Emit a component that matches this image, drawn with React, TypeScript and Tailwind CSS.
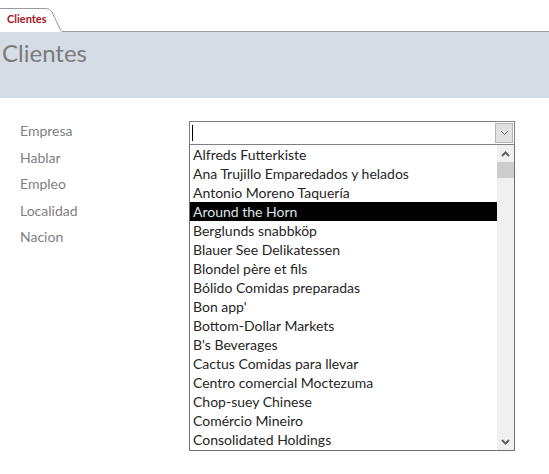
const empresas = [
  "Alfreds Futterkiste",
  "Ana Trujillo Emparedados y helados",
  "Antonio Moreno Taquería",
  "Around the Horn",
  "Berglunds snabbköp",
  "Blauer See Delikatessen",
  "Blondel père et fils",
  "Bólido Comidas preparadas",
  "Bon app'",
  "Bottom-Dollar Markets",
  "B's Beverages",
  "Cactus Comidas para llevar",
  "Centro comercial Moctezuma",
  "Chop-suey Chinese",
  "Comércio Mineiro",
  "Consolidated Holdings",
];

const campos = ["Empresa", "Hablar", "Empleo", "Localidad", "Nacion"];

function Chevron({ up, thick }: { up?: boolean; thick?: boolean }) {
  return (
    <svg width="9" height="6" viewBox="0 0 9 6" className="block">
      <path
        d={up ? "M1 5 L4.5 1.5 L8 5" : "M1 1 L4.5 4.5 L8 1"}
        fill="none"
        stroke={thick ? "#606060" : "#707070"}
        strokeWidth={thick ? 2 : 1}
      />
    </svg>
  );
}

export default function App() {
  const selected = 3;

  return (
    <div className="w-[549px] h-[474px] bg-white overflow-hidden font-['Lato','Open_Sans',sans-serif]">
      {/* tab strip */}
      <div className="h-[32px] pt-[8px] flex items-end">
        <div className="relative w-[62px] h-[24px]">
          <svg width="62" height="24" viewBox="0 0 62 24" className="absolute inset-0">
            <path d="M0 0.5 H46 Q50 0.5 52 4 L60 21 Q61.5 23.5 62 23.5" fill="#fff" stroke="#9a9a9a" strokeWidth="1" />
          </svg>
          <span className="relative block pl-[7px] pt-[4px] text-[11px] font-bold leading-[14px] text-[#a3161d]">
            Clientes
          </span>
        </div>
        <div className="flex-1 border-b border-[#9a9a9a]" />
      </div>

      {/* header */}
      <div className="h-[66px] bg-[#d6dce5] pl-[2px] pt-[6px]">
        <h1 className="text-[24px] leading-[30px] text-[#7b7b7b]">Clientes</h1>
      </div>

      {/* form */}
      <div className="flex pl-[20px] pt-[20px]">
        <div className="w-[169px] flex flex-col">
          {campos.map((c) => (
            <div key={c} className="h-[26.5px] leading-[26px] text-[14px] text-[#7f7f7f]">
              {c}
            </div>
          ))}
        </div>

        <div className="w-[326px] mt-[3px]">
          {/* combo */}
          <div className="h-[24px] border border-[#808080] flex items-center">
            <div className="ml-[2px] w-px h-[16px] bg-black" />
            <div className="flex-1" />
            <div className="w-[18px] h-[20px] mr-px bg-[#e1e1e1] border border-[#b4b4b4] flex items-center justify-center">
              <Chevron />
            </div>
          </div>

          {/* list */}
          <div className="h-[306px] border border-t-0 border-[#707070] flex">
            <div className="flex-1 flex flex-col">
              {empresas.map((e, i) => (
                <div
                  key={e}
                  className={[
                    "h-[19px] pl-[3px] leading-[19px] text-[14px] whitespace-nowrap",
                    i === selected ? "bg-black text-[#dde3ea]" : "text-[#262626]",
                  ].join(" ")}
                >
                  {e}
                </div>
              ))}
            </div>
            <div className="w-[17px] bg-[#f0f0f0] flex flex-col">
              <div className="h-[17px] flex items-center justify-center">
                <Chevron up thick />
              </div>
              <div className="h-[16px] bg-[#cdcdcd]" />
              <div className="flex-1" />
              <div className="h-[17px] flex items-center justify-center">
                <Chevron thick />
              </div>
            </div>
          </div>
        </div>
      </div>
    </div>
  );
}
